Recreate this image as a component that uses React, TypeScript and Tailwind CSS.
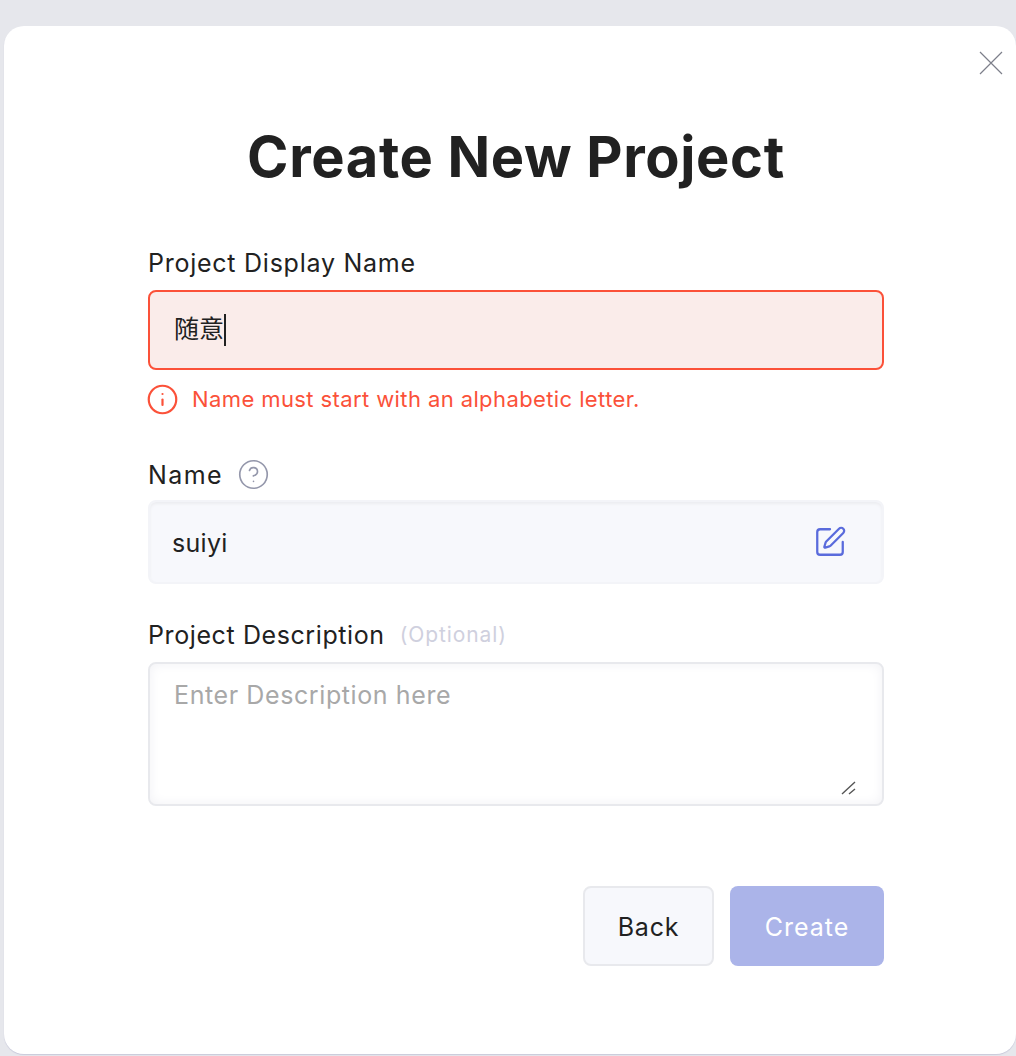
import React from 'react';
import { Info, CircleHelp, SquarePen } from 'lucide-react';

const font = "font-['Inter','Noto_Sans_CJK_SC',sans-serif]";

export default function App() {
  return (
    <div className={`h-[1056px] w-[1016px] overflow-hidden bg-[#e6e7ec] pl-1 pt-[26px] ${font}`}>
      <div className="relative h-[1028px] w-[1012px] rounded-[20px] bg-white pl-[144px] shadow-[0_1px_1px_#c9cadb]">
        <button className="absolute right-[13px] top-[25px] text-[#7d7f8a]">
          <svg width="24" height="24" viewBox="0 0 24 24" fill="none" stroke="currentColor" strokeWidth="1.2">
            <path d="M1 1l22 22M23 1 1 23" />
          </svg>
        </button>

        <div className="w-[736px]">
          <h1 className="pt-[95px] text-center text-[56px] font-bold leading-[72px] tracking-[0.65px] text-[#212121]">
            Create New Project
          </h1>

          <label className="mt-[53px] block text-[25px] leading-[34px] tracking-[0.75px] text-[#212121]">Project Display Name</label>
          <div className="mt-[10px] flex h-[80px] items-center rounded-lg border-2 border-[#fb5139] bg-[#faecea] pl-[24px] text-[25px] text-[#212121]">
            <span>随意</span>
            <span className="h-[32px] w-[2px] bg-[#212121]" />
          </div>
          <div className="mt-[14px] flex h-[30px] items-center gap-[13px] text-[#fb5139]">
            <Info size={33} strokeWidth={1.6} className="-ml-[2px]" />
            <span className="text-[22px] tracking-[0.4px]">Name must start with an alphabetic letter.</span>
          </div>

          <div className="mt-[43px] flex h-[34px] items-center gap-[14px] text-[#212121]">
            <span className="pt-[3px] text-[25px] tracking-[1.4px]">Name</span>
            <CircleHelp size={33} strokeWidth={1.2} className="text-[#9497ab]" />
          </div>
          <div className="mt-[9px] flex h-[84px] items-center justify-between rounded-lg border-2 border-[#f3f4f8] bg-[#f7f8fc] pl-[22px] pr-[35px] text-[25px] tracking-[0.3px] text-[#212121] shadow-[inset_0_2px_3px_#ecedf0]">
            <span className="pt-[4px]">suiyi</span>
            <SquarePen size={34} strokeWidth={1.6} className="text-[#5a6bdc]" />
          </div>

          <div className="mt-[34px] flex h-[34px] items-center gap-[15px] text-[#212121]">
            <span className="pt-[2px] text-[25px] tracking-[0.6px]">Project Description</span>
            <span className="text-[21px] tracking-[0.9px] text-[#cfd0de]">(Optional)</span>
          </div>
          <div className="relative mt-[10px] h-[144px] rounded-lg border-2 border-[#e8e9ed] bg-white pl-6 pt-[14px] text-[25px] leading-[34px] tracking-[0.6px] text-[#a8a8a8] shadow-[inset_0_0_12px_#f1f1f5]">
            Enter Description here
            <svg className="absolute bottom-[9px] right-[25px] text-[#555]" width="16" height="14" viewBox="0 0 16 14" fill="none" stroke="currentColor" strokeWidth="1.4">
              <path d="M1 13 14 1M8 13l6-5" />
            </svg>
          </div>

          <div className="mt-[80px] flex justify-end gap-4">
            <button className="h-[80px] w-[131px] rounded-lg border-2 border-[#e8e9ed] bg-[#f7f8fc] pt-[3px] text-[25px] tracking-[0.8px] text-[#212121]">
              Back
            </button>
            <button className="h-[80px] w-[154px] rounded-lg bg-[#abb4e9] pt-[3px] text-[25px] tracking-[1px] text-white">
              Create
            </button>
          </div>
        </div>
      </div>
    </div>
  );
}
